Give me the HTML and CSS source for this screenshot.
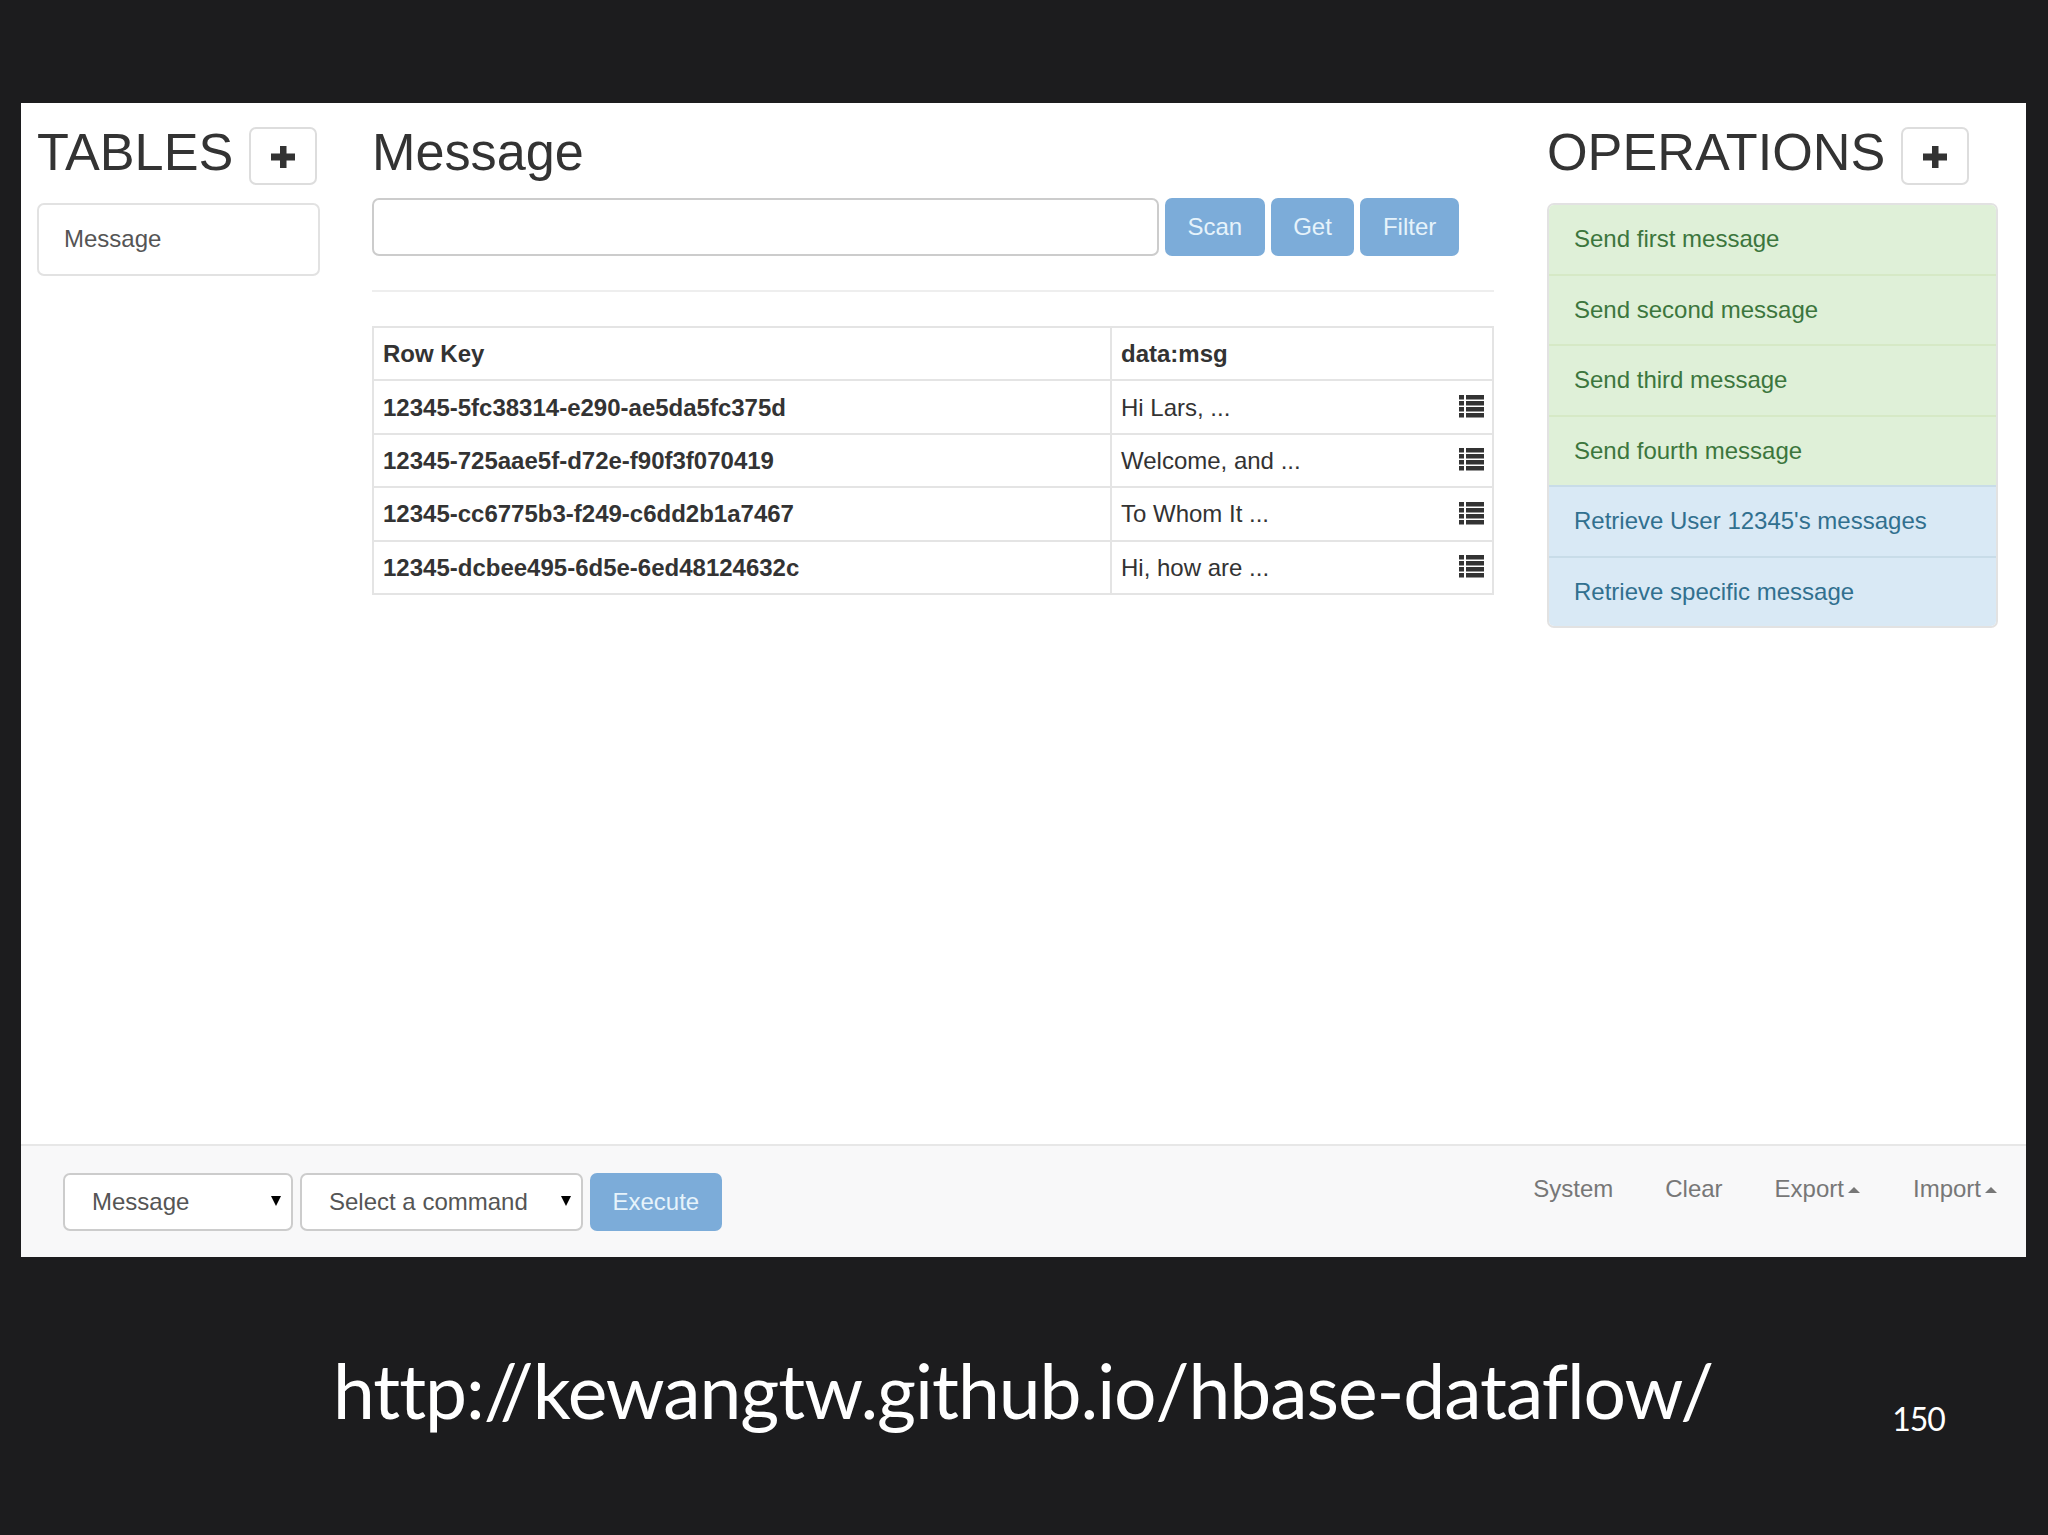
FILE: index.html
```html
<!DOCTYPE html>
<html lang="en">
<head>
    <meta charset="UTF-8">
    <title>HBase Dataflow</title>
    <link rel="stylesheet" href="styles.css">
</head>
<body class="slide">
    <div class="window">
        <div class="main">
            <div class="col_tables">
                <div class="head_row">
                    <h2 class="title">TABLES</h2>
                    <button class="plus_btn">
                        <svg width="24" height="22" viewBox="0 0 24 22"><path d="M9 0h6.500v7.500H24v7h-8.500V22H9v-7.500H0v-7h9z" fill="#333"/></svg>
                    </button>
                </div>
                <div class="list">
                    <div class="list_item">Message</div>
                </div>
            </div>

            <div class="col_message">
                <div class="head_row head_message">
                    <h2 class="title">Message</h2>
                </div>
                <div class="search_row">
                    <div class="search_input"></div>
                    <button class="blue_btn">Scan</button>
                    <button class="blue_btn">Get</button>
                    <button class="blue_btn">Filter</button>
                </div>
                <div class="divider"></div>
                <table class="data_table">
                    <tr>
                        <th class="key_col">Row Key</th>
                        <th>data:msg</th>
                    </tr>
                    <tr>
                        <th>12345-5fc38314-e290-ae5da5fc375d</th>
                        <td><div class="cell">Hi Lars, ...
                            <svg class="list_icon" width="25" height="23" viewBox="0 0 25 23"><path d="M0 0h5v4.500H0zM7 0h18v4.500H7zM0 6h5v4.500H0zM7 6h18v4.500H7zM0 12h5v4.500H0zM7 12h18v4.500H7zM0 18h5v4.500H0zM7 18h18v4.500H7z" fill="#333"/></svg>
                        </div></td>
                    </tr>
                    <tr>
                        <th>12345-725aae5f-d72e-f90f3f070419</th>
                        <td><div class="cell">Welcome, and ...
                            <svg class="list_icon" width="25" height="23" viewBox="0 0 25 23"><path d="M0 0h5v4.500H0zM7 0h18v4.500H7zM0 6h5v4.500H0zM7 6h18v4.500H7zM0 12h5v4.500H0zM7 12h18v4.500H7zM0 18h5v4.500H0zM7 18h18v4.500H7z" fill="#333"/></svg>
                        </div></td>
                    </tr>
                    <tr>
                        <th>12345-cc6775b3-f249-c6dd2b1a7467</th>
                        <td><div class="cell">To Whom It ...
                            <svg class="list_icon" width="25" height="23" viewBox="0 0 25 23"><path d="M0 0h5v4.500H0zM7 0h18v4.500H7zM0 6h5v4.500H0zM7 6h18v4.500H7zM0 12h5v4.500H0zM7 12h18v4.500H7zM0 18h5v4.500H0zM7 18h18v4.500H7z" fill="#333"/></svg>
                        </div></td>
                    </tr>
                    <tr>
                        <th>12345-dcbee495-6d5e-6ed48124632c</th>
                        <td><div class="cell">Hi, how are ...
                            <svg class="list_icon" width="25" height="23" viewBox="0 0 25 23"><path d="M0 0h5v4.500H0zM7 0h18v4.500H7zM0 6h5v4.500H0zM7 6h18v4.500H7zM0 12h5v4.500H0zM7 12h18v4.500H7zM0 18h5v4.500H0zM7 18h18v4.500H7z" fill="#333"/></svg>
                        </div></td>
                    </tr>
                </table>
            </div>

            <div class="col_ops">
                <div class="head_row">
                    <h2 class="title">OPERATIONS</h2>
                    <button class="plus_btn">
                        <svg width="24" height="22" viewBox="0 0 24 22"><path d="M9 0h6.500v7.500H24v7h-8.500V22H9v-7.500H0v-7h9z" fill="#333"/></svg>
                    </button>
                </div>
                <div class="list">
                    <div class="list_item green">Send first message</div>
                    <div class="list_item green">Send second message</div>
                    <div class="list_item green">Send third message</div>
                    <div class="list_item green">Send fourth message</div>
                    <div class="list_item blue">Retrieve User 12345's messages</div>
                    <div class="list_item blue">Retrieve specific message</div>
                </div>
            </div>
        </div>

        <div class="footer">
            <div class="controls">
                <div class="select select_table">Message<span class="arrow"></span></div>
                <div class="select select_command">Select a command<span class="arrow"></span></div>
                <button class="blue_btn">Execute</button>
            </div>
            <div class="nav">
                <span>System</span>
                <span>Clear</span>
                <span>Export<i class="caret"></i></span>
                <span class="nav_last">Import<i class="caret"></i></span>
            </div>
        </div>
    </div>

    <div class="caption">
        <div class="url">http://kewangtw.github.io/hbase-dataflow/</div>
        <div class="page_num">150</div>
    </div>
</body>
</html>
```

FILE: styles.css
```css
body {
    margin: 0;
}
.slide {
    width: 2048px;
    height: 1535px;
    overflow: hidden;
    background: #1c1c1e;
    padding: 103px 0 0 21px;
    box-sizing: border-box;
    font-family: "Liberation Sans", Arial, sans-serif;
    font-size: 24px;
    color: #333;
}
.window {
    width: 2005px;
    height: 1154px;
    background: #fff;
    display: flex;
    flex-direction: column;
}
.main {
    flex: 1;
    display: flex;
    padding: 24px 0 0 16px;
}
.col_tables {
    width: 283px;
    margin-right: 52px;
}
.col_message {
    width: 1122px;
    margin-right: 53px;
}
.col_ops {
    width: 451px;
}
.head_row {
    display: flex;
    align-items: flex-start;
    height: 58px;
    margin-bottom: 18px;
    gap: 16px;
}
.head_message {
    margin-bottom: 13px;
}
.title {
    margin: 0;
    font-size: 52.200px;
    font-weight: 400;
    line-height: 50px;
    color: #333;
}
.plus_btn {
    width: 68px;
    height: 58px;
    padding: 2px 0 0;
    background: #fff;
    border: 2px solid #ddd;
    border-radius: 7px;
    display: flex;
    align-items: center;
    justify-content: center;
}
.list {
    display: flex;
    flex-direction: column;
    border: 2px solid #e2e2e2;
    border-radius: 7px;
    overflow: hidden;
}
.list_item {
    height: 68.500px;
    line-height: 68px;
    padding-left: 25px;
    color: #555;
    border-top: 2px solid #e6e6e6;
}
.list_item:first-child {
    height: 68.500px;
    border-top: none;
}
.green {
    background: #dff0d8;
    color: #3c763d;
    border-top-color: #d6e9c6;
}
.blue {
    background: #d9e9f5;
    color: #31708f;
    border-top-color: #c8dce8;
}
.search_row {
    display: flex;
    gap: 6px;
    height: 58px;
}
.search_input {
    width: 787px;
    box-sizing: border-box;
    border: 2px solid #ccc;
    border-radius: 7px;
}
.blue_btn {
    height: 58px;
    padding: 0 22.500px;
    border: none;
    border-radius: 7px;
    background: #7cacd9;
    color: #e6f3fb;
    font-family: inherit;
    font-size: 24px;
}
.divider {
    height: 2px;
    margin: 34px 0;
    background: #eee;
}
.data_table {
    width: 1122px;
    border-collapse: collapse;
    table-layout: fixed;
}
.data_table th, .data_table td {
    height: 53.400px;
    padding: 1px 8px 0 9px;
    border: 2px solid #e4e4e4;
    text-align: left;
    box-sizing: border-box;
}
.key_col {
    width: 738px;
}
.cell {
    display: flex;
    justify-content: space-between;
    align-items: center;
}
.list_icon {
    flex: none;
    margin-bottom: 2px;
}
.footer {
    height: 113px;
    box-sizing: border-box;
    background: #f8f8f9;
    border-top: 2px solid #e7e7e7;
    display: flex;
    justify-content: space-between;
    padding: 27px 29px 0 42px;
}
.controls {
    display: flex;
    gap: 7px;
}
.select {
    height: 58px;
    line-height: 54px;
    box-sizing: border-box;
    background: #fff;
    border: 2px solid #ccc;
    border-radius: 7px;
    padding: 0 10px 0 27px;
    color: #555;
    display: flex;
    justify-content: space-between;
    align-items: center;
}
.select_table {
    width: 230px;
}
.select_command {
    width: 283px;
}
.arrow {
    width: 0;
    height: 0;
    margin-bottom: 2px;
    border-left: 5px solid transparent;
    border-right: 5px solid transparent;
    border-top: 10px solid #000;
}
.nav {
    display: flex;
    gap: 52px;
    line-height: 32px;
    color: #777;
}
.nav_last {
    margin-left: 1px;
}
.caret {
    display: inline-block;
    width: 0;
    height: 0;
    margin-left: 4px;
    vertical-align: 4px;
    border-left: 6.500px solid transparent;
    border-right: 6.500px solid transparent;
    border-bottom: 6px solid #777;
}
.caption {
    display: flex;
    margin-top: 83px;
    padding-left: 312px;
    color: #fff;
    font-family: Lato, "Noto Sans", sans-serif;
}
.url {
    font-size: 75px;
    letter-spacing: -1.030px;
    line-height: 100px;
    white-space: nowrap;
}
.page_num {
    margin: 59px 0 0 179px;
    font-size: 32px;
    letter-spacing: -1px;
    line-height: 40px;
}
```
